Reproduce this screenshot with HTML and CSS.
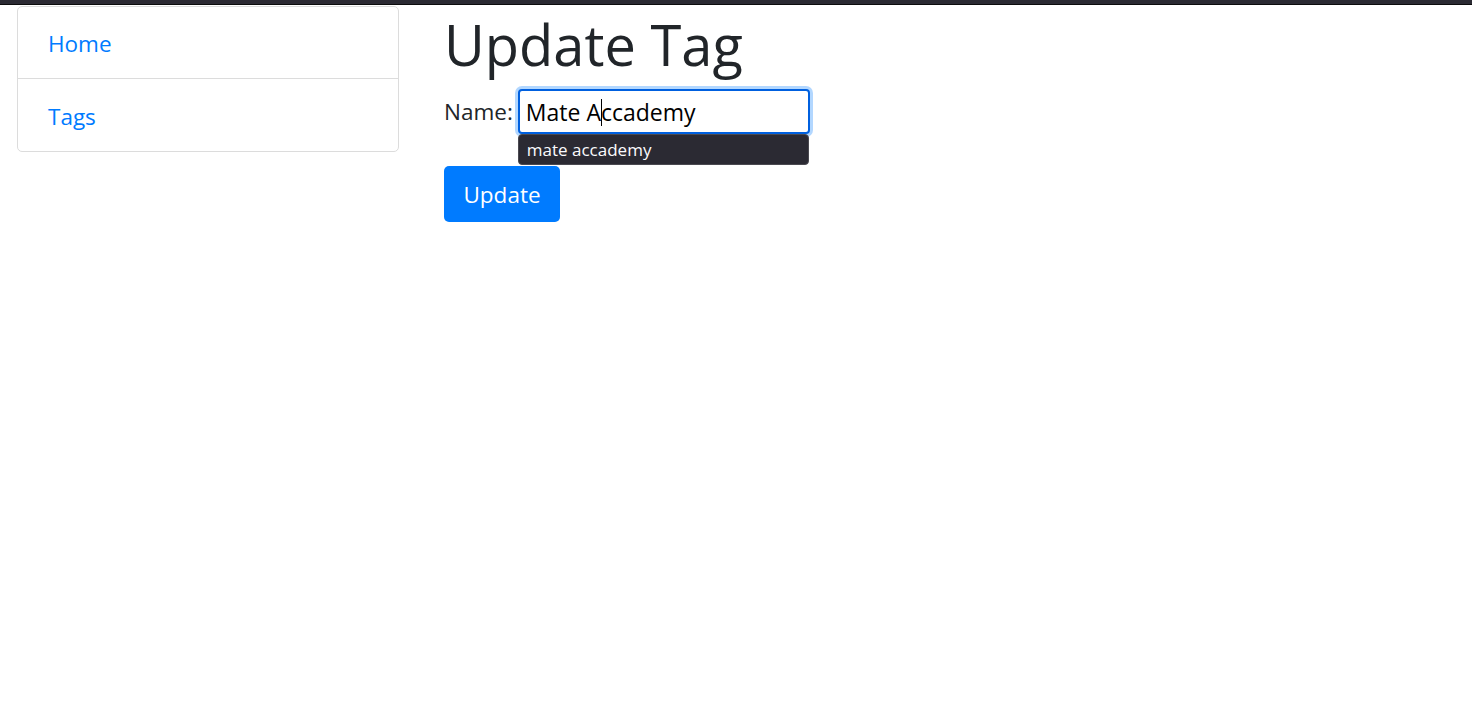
FILE: index.html
```html
<!DOCTYPE html>
<html>
<head>
<meta charset="utf-8">
<title>Update Tag</title>
<link rel="stylesheet" href="styles.css">
</head>
<body>
<div class="topbar"></div>
<div class="layout">
  <aside class="sidebar">
    <ul class="list-group">
      <li class="list-item"><a href="#">Home</a></li>
      <li class="list-item"><a href="#">Tags</a></li>
    </ul>
  </aside>
  <main class="content">
    <h1 class="title">Update Tag</h1>
    <form class="form">
      <div class="field">
        <label class="label" for="name">Name:</label>
        <div class="input-wrap">
          <div class="input"><span>Mate A</span><span class="caret"></span><span>ccademy</span></div>
          <div class="autocomplete">mate accademy</div>
        </div>
      </div>
      <button type="button" class="btn">Update</button>
    </form>
  </main>
</div>
</body>
</html>
```
FILE: styles.css
```css
html, body {
  margin: 0;
  padding: 0;
  background: #fff;
  font-family: "Segoe UI", "Open Sans", "Noto Sans", sans-serif;
  color: #212529;
}
.topbar {
  height: 4px;
  background: #2b2a33;
  border-bottom: 1px solid #0c0c0d;
}
.layout {
  display: flex;
  align-items: flex-start;
}
.sidebar {
  width: 382px;
  margin: 1px 0 0 17px;
  flex: none;
}
.list-group {
  list-style: none;
  margin: 0;
  padding: 0;
  border: 1px solid #dcdcdc;
  border-radius: 5px;
}
.list-item {
  padding: 20px 30px 18px;
  font-size: 22.5px;
  line-height: 33px;
}
.list-item + .list-item {
  border-top: 1px solid #dcdcdc;
  padding-top: 21px;
}
.list-item a {
  color: #007bff;
  text-decoration: none;
}
.content {
  margin-left: 45px;
}
.title {
  margin: 6px 0 0;
  font-size: 56px;
  font-weight: 400;
  line-height: 67px;
  color: #212529;
}
.form {
  margin-top: 11px;
}
.field {
  display: flex;
  align-items: center;
  gap: 5px;
}
.label {
  font-size: 22.5px;
  color: #212529;
}
.input-wrap {
  position: relative;
}
.input {
  box-sizing: border-box;
  width: 292px;
  height: 45px;
  border: 2px solid #0060df;
  border-radius: 4px;
  box-shadow: 0 0 0 3px rgba(0, 123, 255, 0.3);
  padding: 1px 6px 0;
  display: flex;
  align-items: center;
  font-size: 23px;
  color: #000;
  background: #fff;
}
.caret {
  display: inline-block;
  width: 1px;
  height: 27px;
  background: #000;
  margin: 0 -1px 0 0;
}
.autocomplete {
  position: absolute;
  left: 0;
  top: 45px;
  box-sizing: border-box;
  width: 291px;
  height: 31px;
  background: #2b2a33;
  border: 1px solid #4a4950;
  border-radius: 4px;
  color: #fbfbfe;
  font-size: 17px;
  line-height: 29px;
  padding: 0 8px;
}
.btn {
  margin-top: 32px;
  width: 116px;
  height: 56px;
  border: none;
  border-radius: 5px;
  background: #007bff;
  color: #fff;
  font-family: inherit;
  font-size: 22.5px;
  padding: 0;
  cursor: pointer;
}
```
